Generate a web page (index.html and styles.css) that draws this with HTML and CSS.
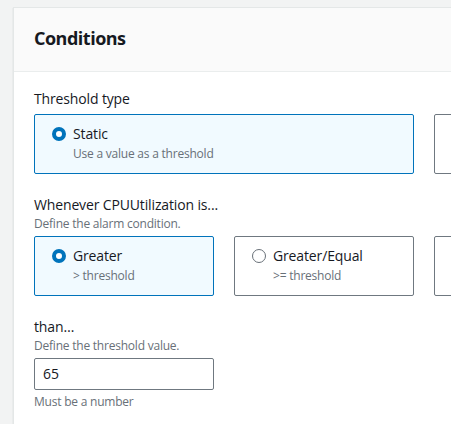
FILE: index.html
```html
<!DOCTYPE html>
<html lang="en">
<head>
<meta charset="utf-8">
<title>Conditions</title>
<link rel="stylesheet" href="styles.css">
</head>
<body>
<section class="panel">
  <header class="panel-header">
    <h2 class="panel-title">Conditions</h2>
  </header>
  <div class="panel-body">
    <div class="field">
      <div class="label">Threshold type</div>
      <div class="tiles tiles-2">
        <label class="tile selected">
          <span class="radio checked"></span>
          <span class="tile-text">
            <span class="tile-title">Static</span>
            <span class="tile-desc">Use a value as a threshold</span>
          </span>
        </label>
        <label class="tile">
          <span class="radio"></span>
          <span class="tile-text">
            <span class="tile-title">Anomaly detection</span>
            <span class="tile-desc">Use a band as a threshold</span>
          </span>
        </label>
      </div>
    </div>

    <div class="field">
      <div class="label">Whenever CPUUtilization is...</div>
      <div class="desc">Define the alarm condition.</div>
      <div class="tiles tiles-4">
        <label class="tile selected">
          <span class="radio checked"></span>
          <span class="tile-text">
            <span class="tile-title">Greater</span>
            <span class="tile-desc">&gt; threshold</span>
          </span>
        </label>
        <label class="tile">
          <span class="radio"></span>
          <span class="tile-text">
            <span class="tile-title">Greater/Equal</span>
            <span class="tile-desc">&gt;= threshold</span>
          </span>
        </label>
        <label class="tile">
          <span class="radio"></span>
          <span class="tile-text">
            <span class="tile-title">Lower/Equal</span>
            <span class="tile-desc">&lt;= threshold</span>
          </span>
        </label>
        <label class="tile">
          <span class="radio"></span>
          <span class="tile-text">
            <span class="tile-title">Lower</span>
            <span class="tile-desc">&lt; threshold</span>
          </span>
        </label>
      </div>
    </div>

    <div class="field">
      <div class="label">than…</div>
      <div class="desc">Define the threshold value.</div>
      <div class="input">65</div>
      <div class="hint">Must be a number</div>
    </div>
  </div>
</section>
</body>
</html>
```
FILE: styles.css
```css
html, body {
  margin: 0;
  padding: 0;
  overflow: hidden;
}
body {
  background: #f2f3f3;
  font-family: "Open Sans", "Noto Sans", sans-serif;
  color: #16191f;
  padding: 7px 0 0 13px;
}
.panel {
  width: 820px;
  background: #ffffff;
  border: 1px solid #e4e7e7;
  border-right: none;
  box-shadow: 0 1px 1px rgba(0, 28, 36, 0.2);
}
.panel-header {
  background: #fafafa;
  border-bottom: 1px solid #eaeded;
  box-sizing: border-box;
  height: 64px;
  display: flex;
  align-items: center;
  padding: 0 20px 4px 20px;
}
.panel-title {
  margin: 0;
  font-size: 18px;
  font-weight: 700;
  line-height: 22px;
  letter-spacing: -0.5px;
}
.panel-body {
  padding: 16px 20px 20px 20px;
  display: flex;
  flex-direction: column;
  gap: 20px;
}
.field {
  display: flex;
  flex-direction: column;
}
.label {
  font-size: 14px;
  line-height: 22px;
  margin-bottom: 4px;
  letter-spacing: -0.14px;
}
.desc {
  font-size: 12px;
  line-height: 16px;
  color: #687078;
  margin-top: -4px;
  margin-bottom: 4px;
  letter-spacing: -0.22px;
}
.tiles {
  display: grid;
  gap: 20px;
  width: 780px;
}
.tiles-2 { grid-template-columns: 380px 380px; }
.tiles-4 { grid-template-columns: repeat(4, 180px); }
.tile {
  box-sizing: border-box;
  height: 60px;
  border: 1px solid #6f7880;
  border-radius: 2px;
  display: flex;
  align-items: flex-start;
  padding: 10px 16px 10px 17px;
  gap: 7px;
  background: #ffffff;
}
.tile.selected {
  border-color: #0073bb;
  background: #f1faff;
}
.radio {
  box-sizing: border-box;
  width: 14px;
  height: 14px;
  border-radius: 50%;
  border: 1px solid #687078;
  background: #fff;
  flex: none;
  margin-top: 2px;
}
.radio.checked {
  border: 4px solid #0073bb;
}
.tile-text {
  display: flex;
  flex-direction: column;
}
.tile-title {
  font-size: 14px;
  line-height: 18px;
  letter-spacing: -0.14px;
}
.tile-desc {
  font-size: 12px;
  line-height: 16px;
  color: #687078;
  margin-top: 3px;
  letter-spacing: -0.22px;
}
.input {
  box-sizing: border-box;
  width: 180px;
  height: 32px;
  border: 1px solid #6f7880;
  border-radius: 2px;
  font-size: 14px;
  line-height: 20px;
  padding: 5px 8px;
}
.hint {
  font-size: 12px;
  line-height: 16px;
  color: #687078;
  margin-top: 4px;
  letter-spacing: -0.22px;
}
```
